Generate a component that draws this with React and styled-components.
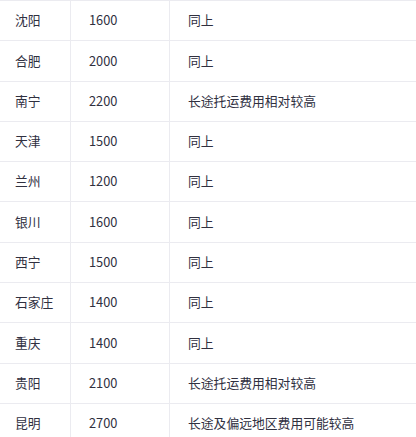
import React from "react";
import styled, { createGlobalStyle } from "styled-components";

const Global = createGlobalStyle`
  html, body { margin: 0; padding: 0; background: #ffffff; }
  body { overflow: hidden; }
`;

const Table = styled.div`
  width: 416px;
  display: flex;
  flex-direction: column;
  font-family: "Noto Sans CJK SC", "Noto Sans", sans-serif;
  font-size: 12.8px;
  color: #30303f;
`;

const Row = styled.div`
  display: grid;
  grid-template-columns: 70px 99px 1fr;
  height: 40.3px;
  box-sizing: border-box;
  border-top: 1px solid #ebebf0;
`;

const Cell = styled.div`
  display: flex;
  align-items: center;
  padding-left: ${(p) => (p.$first ? "15px" : "18px")};
  border-left: ${(p) => (p.$first ? "none" : "1px solid #ebebf0")};
  white-space: nowrap;
  line-height: 1;
`;

const rows = [
  ["沈阳", "1600", "同上"],
  ["合肥", "2000", "同上"],
  ["南宁", "2200", "长途托运费用相对较高"],
  ["天津", "1500", "同上"],
  ["兰州", "1200", "同上"],
  ["银川", "1600", "同上"],
  ["西宁", "1500", "同上"],
  ["石家庄", "1400", "同上"],
  ["重庆", "1400", "同上"],
  ["贵阳", "2100", "长途托运费用相对较高"],
  ["昆明", "2700", "长途及偏远地区费用可能较高"],
];

export default function App() {
  return (
    <>
      <Global />
      <Table>
        {rows.map((r) => (
          <Row key={r[0]}>
            <Cell $first>{r[0]}</Cell>
            <Cell>{r[1]}</Cell>
            <Cell>{r[2]}</Cell>
          </Row>
        ))}
      </Table>
    </>
  );
}
